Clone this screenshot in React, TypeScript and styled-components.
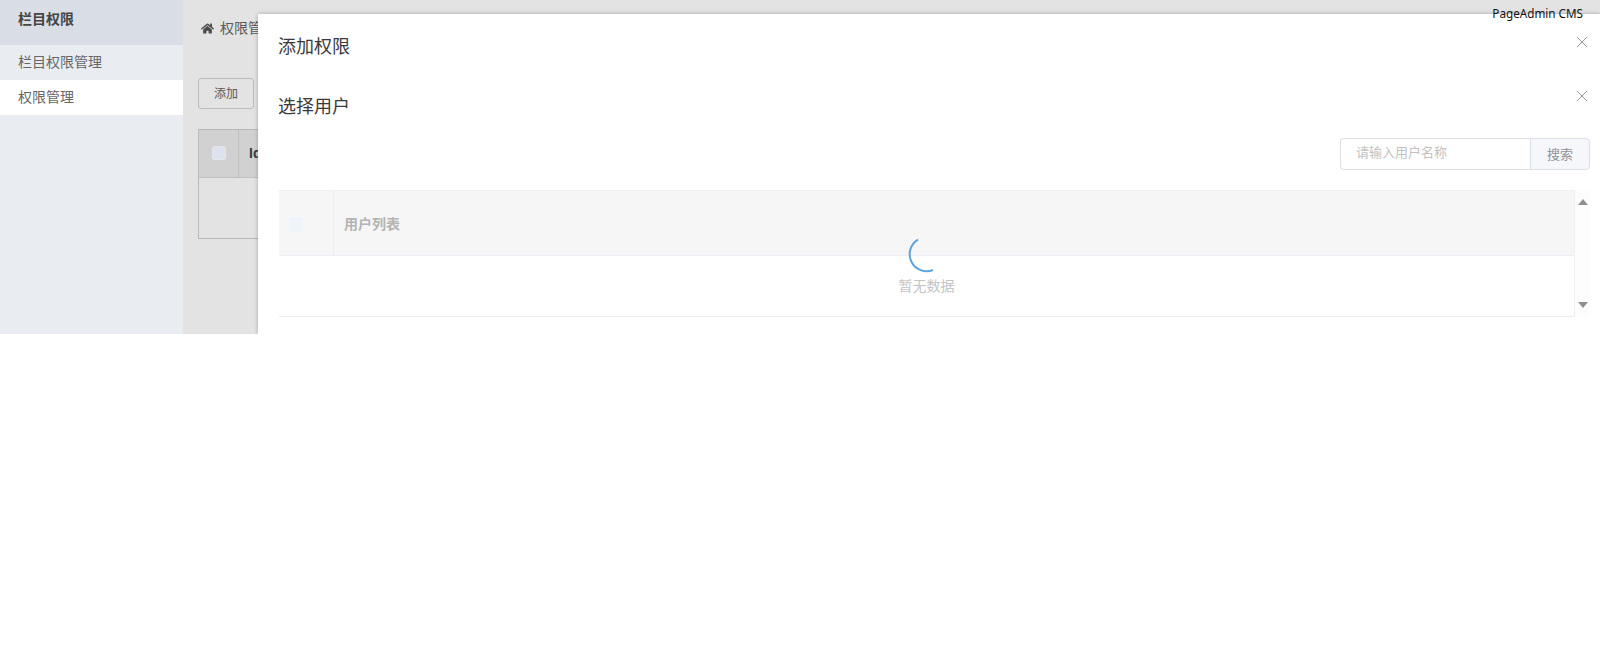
import React from "react";
import styled, { createGlobalStyle } from "styled-components";
import { FaHome } from "react-icons/fa";

const CJK = `"Liberation Sans", "Noto Sans CJK SC", sans-serif`;

const GlobalStyle = createGlobalStyle`
  html, body {
    margin: 0;
    padding: 0;
    background: #fff;
    font-family: ${CJK};
  }
  * { box-sizing: border-box; }
`;

const Page = styled.div`
  position: relative;
  display: flex;
  height: 334px;
  overflow: hidden;
`;

const Sidebar = styled.aside`
  width: 183px;
  flex-shrink: 0;
  background: #e9edf2;
`;

const SideTitle = styled.div`
  height: 45px;
  padding: 0 18px 9px;
  display: flex;
  align-items: center;
  background: #d9dee6;
  color: #444;
  font-size: 14px;
  font-weight: 700;
`;

const SideItem = styled.div<{ $active?: boolean }>`
  height: 35px;
  padding: 0 0 4px 18px;
  display: flex;
  align-items: center;
  color: #666;
  font-size: 14px;
  background: ${(p) => (p.$active ? "#fff" : "transparent")};
`;

const Main = styled.main`
  position: relative;
  flex: 1;
  padding: 0 15px;
  background: #fff;
`;

const Breadcrumb = styled.div`
  height: 69px;
  padding: 19px 0 0 3px;
  display: flex;
  align-items: flex-start;
  gap: 6px;
  color: #666;
  font-size: 14px;
  line-height: 18px;
`;

const Toolbar = styled.div`
  padding-top: 9px;
`;

const ToolButton = styled.button`
  width: 56px;
  height: 31px;
  padding: 0 0 2px;
  border: 1px solid #d4d4d4;
  border-radius: 3px;
  background: #fff;
  color: #666;
  font: 12px ${CJK};
`;

const GridTable = styled.div`
  margin-top: 20px;
  height: 110px;
  border: 1px solid #d0d0d0;
`;

const GridHead = styled.div`
  height: 48px;
  display: flex;
  align-items: center;
  background: #ebebeb;
  border-bottom: 1px solid #d8d8d8;
`;

const CheckCell = styled.div<{ $width: number; $line: string; $lift?: number; $inset?: number }>`
  width: ${(p) => p.$width}px;
  align-self: stretch;
  flex-shrink: 0;
  display: flex;
  align-items: center;
  justify-content: ${(p) => (p.$inset ? "flex-start" : "center")};
  padding-left: ${(p) => p.$inset ?? 0}px;
  padding-bottom: ${(p) => p.$lift ?? 0}px;
  border-right: 1px solid ${(p) => p.$line};
`;

// the header checkbox keeps its blue tint over the loading mask
const HeadCheckBox = styled.span`
  position: relative;
  z-index: 1;
  width: 14px;
  height: 14px;
  border: 1px solid #e6e6e6;
  border-radius: 2px;
  background: #dde3ee;
`;

const ListCheckBox = styled.span`
  width: 14px;
  height: 15px;
  margin-top: 2px;
  background: #eef4fa;
`;

const IdLabel = styled.span`
  margin: 0 0 2px 10px;
  color: #444;
  font-size: 14px;
  font-weight: 700;
`;

const Mask = styled.div`
  position: absolute;
  inset: 0;
  background: rgba(0, 0, 0, 0.11);
`;

const Modal = styled.section`
  position: absolute;
  left: 258px;
  top: 14px;
  right: 0;
  bottom: 0;
  padding: 0 10px 0 20px;
  background: #fff;
  box-shadow: 0 0 4px rgba(0, 0, 0, 0.28);
`;

const ModalHead = styled.header`
  height: 62px;
  display: flex;
  align-items: flex-start;
  justify-content: space-between;
  padding-right: 2px;
`;

const HeadTitle = styled.h2<{ $top: number }>`
  margin: ${(p) => p.$top}px 0 0;
  color: #3a3a3a;
  font-size: 18px;
  font-weight: 400;
  line-height: 26px;
`;

const CloseIcon = styled.svg<{ $top: number }>`
  margin-top: ${(p) => p.$top}px;
  width: 12px;
  height: 12px;
  stroke: #999;
  stroke-width: 1;
  fill: none;
`;

const SearchRow = styled.div`
  display: flex;
  justify-content: flex-end;
`;

const SearchInput = styled.div`
  width: 190px;
  height: 32px;
  padding: 0 0 6px 15px;
  display: flex;
  align-items: center;
  border: 1px solid #dcdfe6;
  border-right: 0;
  border-radius: 4px 0 0 4px;
  color: #c2c2c2;
  font-size: 13px;
`;

const SearchButton = styled.div`
  width: 60px;
  height: 32px;
  padding-bottom: 2px;
  display: flex;
  align-items: center;
  justify-content: center;
  border: 1px solid #dcdfe6;
  border-radius: 0 4px 4px 0;
  background: #f5f7fa;
  color: #909399;
  font-size: 13px;
`;

const ListWrap = styled.div`
  position: relative;
  margin: 20px 0 0 1px;
  display: flex;
`;

const ListTable = styled.div`
  flex: 1;
  height: 127px;
  border-right: 1px solid #f0f0f0;
  border-bottom: 1px solid #ebeef5;
`;

const ListHead = styled.div`
  height: 66px;
  display: flex;
  align-items: center;
  background: #f6f6f6;
  border-top: 1px solid #f0f0f0;
  border-bottom: 1px solid #ebeef5;
`;

const ListTitle = styled.span`
  margin-left: 10px;
  color: #b4b4b4;
  font-size: 14px;
  font-weight: 700;
`;

const EmptyText = styled.div`
  height: 60px;
  padding-top: 21px;
  text-align: center;
  color: #c4c4c4;
  font-size: 14px;
  line-height: 18px;
`;

const ScrollTrack = styled.div`
  width: 15px;
  height: 127px;
  display: flex;
  flex-direction: column;
  justify-content: space-between;
  align-items: center;
  padding: 9px 0;
  background: #fdfdfd;
`;

const Arrow = styled.span<{ $down?: boolean }>`
  width: 0;
  height: 0;
  border-left: 5px solid transparent;
  border-right: 5px solid transparent;
  ${(p) =>
    p.$down ? "border-top: 6px solid #8f8f8f;" : "border-bottom: 6px solid #8f8f8f;"}
`;

const Spinner = styled.svg`
  position: absolute;
  left: 628px;
  top: 44px;
  width: 40px;
  height: 40px;
  fill: none;
  stroke: #5ea3dc;
  stroke-width: 2;
`;

const Brand = styled.div`
  position: absolute;
  top: 6px;
  right: 17px;
  color: #111;
  font: 11.7px/15px "Noto Sans", sans-serif;
`;

const Close = ({ top }: { top: number }) => (
  <CloseIcon $top={top} viewBox="0 0 12 12">
    <path d="M1 1 L11 11 M11 1 L1 11" />
  </CloseIcon>
);

export default function App() {
  return (
    <Page>
      <GlobalStyle />
      <Sidebar>
        <SideTitle>栏目权限</SideTitle>
        <SideItem>栏目权限管理</SideItem>
        <SideItem $active>权限管理</SideItem>
      </Sidebar>
      <Main>
        <Breadcrumb>
          <FaHome size={13} color="#555" style={{ marginTop: 3 }} />
          权限管理
        </Breadcrumb>
        <Toolbar>
          <ToolButton>添加</ToolButton>
        </Toolbar>
        <GridTable>
          <GridHead>
            <CheckCell $width={40} $line="#d8d8d8" $lift={2}>
              <HeadCheckBox />
            </CheckCell>
            <IdLabel>Id</IdLabel>
          </GridHead>
        </GridTable>
        <Mask />
      </Main>
      <Modal>
        <ModalHead>
          <HeadTitle $top={20}>添加权限</HeadTitle>
          <Close top={22} />
        </ModalHead>
        <ModalHead>
          <HeadTitle $top={18}>选择用户</HeadTitle>
          <Close top={14} />
        </ModalHead>
        <SearchRow>
          <SearchInput>请输入用户名称</SearchInput>
          <SearchButton>搜索</SearchButton>
        </SearchRow>
        <ListWrap>
          <ListTable>
            <ListHead>
              <CheckCell $width={55} $line="#ececec" $inset={10}>
                <ListCheckBox />
              </CheckCell>
              <ListTitle>用户列表</ListTitle>
            </ListHead>
            <EmptyText>暂无数据</EmptyText>
          </ListTable>
          <ScrollTrack>
            <Arrow />
            <Arrow $down />
          </ScrollTrack>
          <Spinner viewBox="0 0 40 40">
            <path d="M11 5.6 A17 17 0 0 0 26 36" />
          </Spinner>
        </ListWrap>
      </Modal>
      <Brand>PageAdmin CMS</Brand>
    </Page>
  );
}
